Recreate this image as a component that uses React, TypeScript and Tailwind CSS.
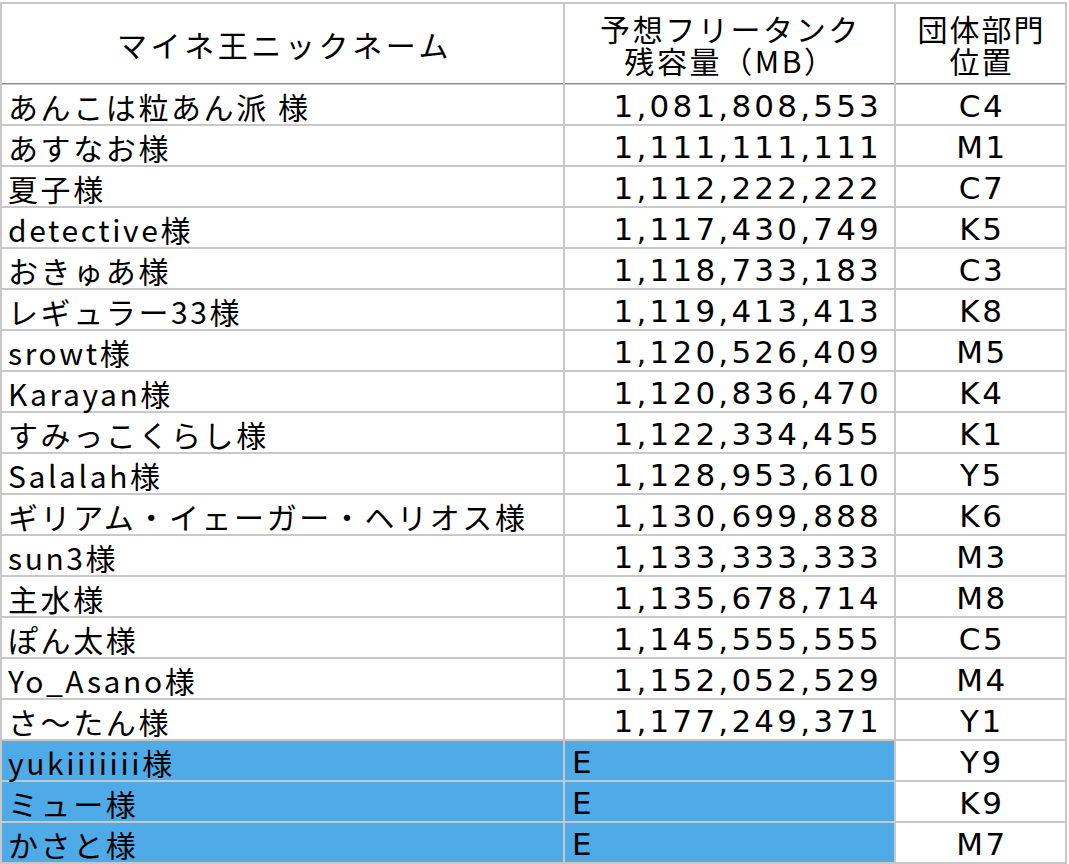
const rows: [string, string, string][] = [
  ['あんこは粒あん派 様', '1,081,808,553', 'C4'],
  ['あすなお様', '1,111,111,111', 'M1'],
  ['夏子様', '1,112,222,222', 'C7'],
  ['detective様', '1,117,430,749', 'K5'],
  ['おきゅあ様', '1,118,733,183', 'C3'],
  ['レギュラー33様', '1,119,413,413', 'K8'],
  ['srowt様', '1,120,526,409', 'M5'],
  ['Karayan様', '1,120,836,470', 'K4'],
  ['すみっこくらし様', '1,122,334,455', 'K1'],
  ['Salalah様', '1,128,953,610', 'Y5'],
  ['ギリアム・イェーガー・ヘリオス様', '1,130,699,888', 'K6'],
  ['sun3様', '1,133,333,333', 'M3'],
  ['主水様', '1,135,678,714', 'M8'],
  ['ぽん太様', '1,145,555,555', 'C5'],
  ['Yo_Asano様', '1,152,052,529', 'M4'],
  ['さ〜たん様', '1,177,249,371', 'Y1'],
];

const entries: [string, string][] = [
  ['yukiiiiiii様', 'Y9'],
  ['ミュー様', 'K9'],
  ['かさと様', 'M7'],
];

const latin = { fontFamily: '"DejaVu Sans", "Noto Sans CJK JP", sans-serif' };

export default function App() {
  return (
    <div
      className="w-[1069px] h-[864px] bg-white pt-[2px] overflow-hidden text-black"
      style={{ fontFamily: '"Noto Sans CJK JP", "Noto Sans", sans-serif' }}
    >
      <div className="grid w-[1067px] grid-cols-[561px_329px_169px] grid-rows-[79px_repeat(19,39px)] gap-[2px] p-[2px] bg-[#c8c8c8] text-[30px] leading-none">
        <div className="bg-white flex items-center justify-center pl-[4px] tracking-[3.6px] shadow-[0_1px_0_#8a8a8a]">
          マイネ王ニックネーム
        </div>
        <div className="bg-white flex flex-col items-center justify-center pl-[2px] leading-[32px] tracking-[2.6px] shadow-[0_1px_0_#8a8a8a]">
          <span>予想フリータンク</span>
          <span>残容量（MB）</span>
        </div>
        <div className="bg-white flex flex-col items-center justify-center pl-[2px] leading-[32px] tracking-[2px] shadow-[0_1px_0_#8a8a8a]">
          <span>団体部門</span>
          <span>位置</span>
        </div>

        {rows.map(([name, mb, pos]) => (
          <Row key={name} name={name} mb={mb} pos={pos} />
        ))}

        {entries.map(([name, pos]) => (
          <div key={name} className="contents">
            <div className="bg-[#4eabe8] flex items-center pl-[6px] pt-[3px] tracking-[2.6px] whitespace-nowrap">
              {name}
            </div>
            <div className="bg-[#4eabe8] flex items-center pl-[7px] pt-[3px] text-[31px]" style={latin}>
              E
            </div>
            <div className="bg-white flex items-center justify-center pl-[3px] pt-[3px] text-[31px] tracking-[2.6px]" style={latin}>
              {pos}
            </div>
          </div>
        ))}
      </div>
    </div>
  );
}

function Row({ name, mb, pos }: { name: string; mb: string; pos: string }) {
  return (
    <>
      <div className="bg-white flex items-center pl-[6px] pt-[3px] tracking-[2.6px] whitespace-nowrap">
        {name}
      </div>
      <div className="bg-white flex items-center justify-end pr-[12px] pt-[3px] text-[31px] tracking-[3.2px]" style={latin}>
        {mb}
      </div>
      <div className="bg-white flex items-center justify-center pl-[3px] pt-[3px] text-[31px] tracking-[2.6px]" style={latin}>
        {pos}
      </div>
    </>
  );
}
